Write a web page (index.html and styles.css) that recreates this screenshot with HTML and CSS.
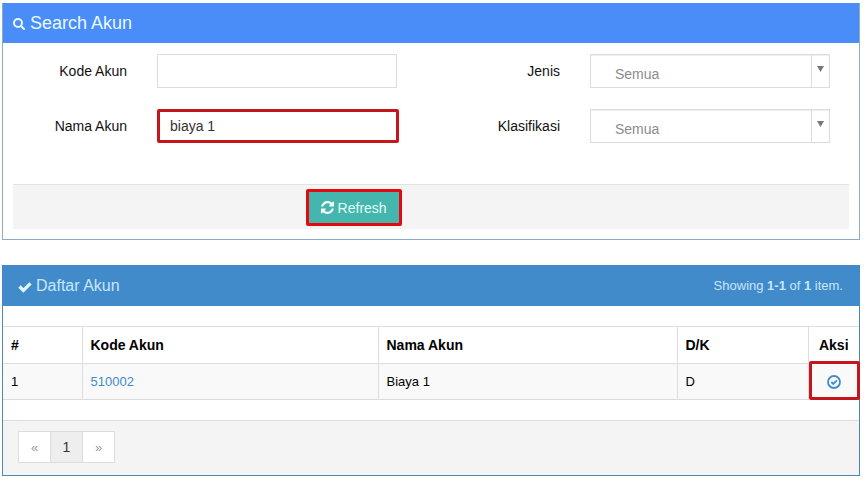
FILE: index.html
```html
<!DOCTYPE html>
<html lang="id">
<head>
    <meta charset="UTF-8">
    <meta name="viewport" content="width=device-width, initial-scale=1">
    <title>Daftar Akun</title>
    <link rel="stylesheet" href="styles.css">
</head>
<body>
    <section class="panel search">
        <h1 class="search-title">
            <svg class="icon-search" viewBox="0 0 12 12" aria-hidden="true"><circle cx="5" cy="5" r="4"/><path d="M8 8l3 3"/></svg>
            Search Akun
        </h1>
        <form class="search-form">
            <div class="fields">
                <div class="field">
                    <label for="kode">Kode Akun</label>
                    <input type="text" id="kode">
                </div>
                <div class="field">
                    <label for="jenis">Jenis</label>
                    <div class="select">
                        <select id="jenis"><option>Semua</option></select>
                        <span class="arrow"></span>
                    </div>
                </div>
                <div class="field">
                    <label for="nama">Nama Akun</label>
                    <input type="text" id="nama" class="marked" value="biaya 1">
                </div>
                <div class="field">
                    <label for="klasifikasi">Klasifikasi</label>
                    <div class="select">
                        <select id="klasifikasi"><option>Semua</option></select>
                        <span class="arrow"></span>
                    </div>
                </div>
            </div>
            <div class="form-actions">
                <button type="button" class="refresh">
                    <svg class="icon-refresh" viewBox="0 0 1536 1536" aria-hidden="true"><path d="M1511 928q0 5-1 7-64 268-268 434.500T764 1536q-146 0-282.500-55T238 1324l-129 129q-19 19-45 19t-45-19-19-45V960q0-26 19-45t45-19h448q26 0 45 19t19 45-19 45l-137 137q71 66 161 102t187 36q134 0 250-65t186-179q11-17 53-117 8-23 30-23h192q13 0 22.500 9.500t9.500 22.500zm25-800v448q0 26-19 45t-45 19h-448q-26 0-45-19t-19-45 19-45l138-138Q969 256 768 256q-134 0-250 65T332 500q-11 17-53 117-8 23-30 23H50q-13 0-22.500-9.500T18 608v-7q65-268 270-434.500T768 0q146 0 284 55.500T1297 212l130-129q19-19 45-19t45 19 19 45z"/></svg>
                    Refresh
                </button>
            </div>
        </form>
    </section>

    <section class="panel list">
        <div class="list-head">
            <h2 class="list-title">
                <svg class="icon-check" viewBox="0 0 14 12" aria-hidden="true"><path d="M1.500 5.500l3.900 3.900L12.500 2.300"/></svg>
                Daftar Akun
            </h2>
            <div class="summary">Showing <b>1-1</b> of <b>1</b> item.</div>
        </div>
        <table class="grid">
            <thead>
                <tr>
                    <th class="col-no">#</th>
                    <th class="col-kode">Kode Akun</th>
                    <th>Nama Akun</th>
                    <th class="col-dk">D/K</th>
                    <th class="col-aksi">Aksi</th>
                </tr>
            </thead>
            <tbody>
                <tr>
                    <td>1</td>
                    <td><a href="#">510002</a></td>
                    <td>Biaya 1</td>
                    <td>D</td>
                    <td class="aksi">
                        <a href="#" aria-label="Pilih">
                            <svg class="icon-ok" viewBox="0 0 14 14" aria-hidden="true"><circle cx="7" cy="7" r="6"/><path d="M4.300 7l2 2L9.900 5.400"/></svg>
                        </a>
                    </td>
                </tr>
            </tbody>
        </table>
        <div class="list-foot">
            <nav class="pager">
                <button type="button" disabled>«</button>
                <button type="button" class="active">1</button>
                <button type="button" disabled>»</button>
            </nav>
        </div>
    </section>
</body>
</html>
```
FILE: styles.css
```css
* {
    box-sizing: border-box;
}
body {
    margin: 0;
    padding: 3px 4px 4px 2px;
    background: #fff;
    color: #111;
    font-family: "Liberation Sans", Arial, sans-serif;
    font-size: 14px;
    line-height: 20px;
}
h1, h2 {
    margin: 0;
    font-weight: normal;
}
svg {
    display: block;
    flex: none;
}
a {
    color: #428bca;
    text-decoration: none;
}
input, select, button {
    font-family: inherit;
    font-size: 14px;
}

/* search panel */
.panel {
    border: 1px solid #8bacc6;
}
.search {
    border-top: none;
    margin-bottom: 25px;
}
.search-title {
    display: flex;
    align-items: center;
    gap: 5px;
    height: 40px;
    padding: 0 10px;
    background: #4b8df8;
    color: #e6faff;
    font-size: 18px;
}
.icon-search {
    width: 12px;
    height: 12px;
    margin-top: 2px;
    fill: none;
    stroke: #e6faff;
    stroke-width: 2;
    stroke-linecap: round;
}
.search-form {
    padding: 11px 10px 10px;
}
.fields {
    display: grid;
    grid-template-columns: 1fr 1fr;
    gap: 21px 30px;
    margin-bottom: 41px;
}
.field {
    display: grid;
    grid-template-columns: 114px 1fr;
    gap: 30px;
    align-items: center;
    padding-right: 19px;
}
.field label {
    text-align: right;
}
.field input,
.field select {
    width: 100%;
    height: 34px;
    border: 1px solid #ddd;
    border-radius: 0;
    background: #fff;
    color: #333;
    padding: 0 12px;
}
.select {
    position: relative;
}
.field select {
    display: block;
    appearance: none;
    padding: 6px 24px 0;
    color: #8c8c8c;
    box-shadow: inset 0 1px 1px #eee;
}
.arrow {
    position: absolute;
    top: 1px;
    right: 1px;
    bottom: 1px;
    width: 18px;
    border-left: 1px solid #ddd;
    pointer-events: none;
}
.arrow::before {
    content: "";
    display: block;
    margin: 11px auto 0;
    width: 7px;
    height: 6px;
    background: #777;
    clip-path: polygon(0 0, 100% 0, 50% 100%);
}
.field input.marked {
    width: calc(100% + 2px);
    border: 3px solid #c4161c;
    border-radius: 2px;
    padding: 0 10px;
}
.form-actions {
    padding: 4px 0 3px 35%;
    background: #f4f4f4;
    border-top: 1px solid #e2e2e2;
}
.refresh {
    display: flex;
    align-items: center;
    gap: 4px;
    height: 37px;
    padding: 0 12px;
    background: #44b6ae;
    border: 3px solid #e3090f;
    border-radius: 2px;
    color: #e4fffc;
    cursor: pointer;
}
.icon-refresh {
    width: 13px;
    height: 13px;
    fill: #fff;
}

/* list panel */
.list {
    border-color: #4d8ba8;
    border-top: none;
}
.list-head {
    display: flex;
    justify-content: space-between;
    align-items: center;
    height: 41px;
    margin: 0 -1px 20px;
    padding: 0 17px 0 16px;
    background: #428bca;
    color: #c5e7fa;
}
.list-title {
    display: flex;
    align-items: center;
    gap: 4px;
    font-size: 16px;
}
.icon-check {
    width: 14px;
    height: 12px;
    margin-top: 2px;
    fill: none;
    stroke: #e0f6ff;
    stroke-width: 3.2;
}
.summary {
    font-size: 13px;
}
.grid {
    width: 100%;
    table-layout: fixed;
    border-collapse: collapse;
    border-top: 1px solid #ddd;
    border-bottom: 1px solid #ddd;
    color: #000;
}
.grid th,
.grid td {
    padding: 8px;
    text-align: left;
    border-left: 1px solid #ddd;
    border-top: 1px solid #ddd;
}
.grid th:first-child,
.grid td:first-child {
    border-left: none;
}
.grid td {
    background: #f9f9f9;
    font-size: 13px;
    line-height: 19px;
}
.col-no {
    width: 79px;
}
.col-kode {
    width: 296px;
}
.col-dk {
    width: 131px;
}
.grid .col-aksi {
    width: 51px;
    text-align: center;
}
.grid .aksi {
    position: relative;
}
.grid .aksi::after {
    content: "";
    position: absolute;
    inset: -3px -1px -1px 0;
    border: 3px solid #c4161c;
    border-radius: 2px;
    pointer-events: none;
}
.icon-ok {
    width: 14px;
    height: 14px;
    margin: 0 auto;
    fill: none;
    stroke: #428bca;
    stroke-width: 1.8;
}
.list-foot {
    margin-top: 20px;
    padding: 10px 15px 12px;
    background: #f4f4f4;
    border-top: 1px solid #ddd;
}
.pager {
    display: flex;
}
.pager button {
    width: 33px;
    height: 32px;
    padding: 0;
    background: #fff;
    border: 1px solid #ddd;
    color: #333;
}
.pager button + button {
    margin-left: -1px;
}
.pager button:disabled {
    color: #999;
    font-size: 13px;
}
.pager .active {
    background: #eee;
}
```
